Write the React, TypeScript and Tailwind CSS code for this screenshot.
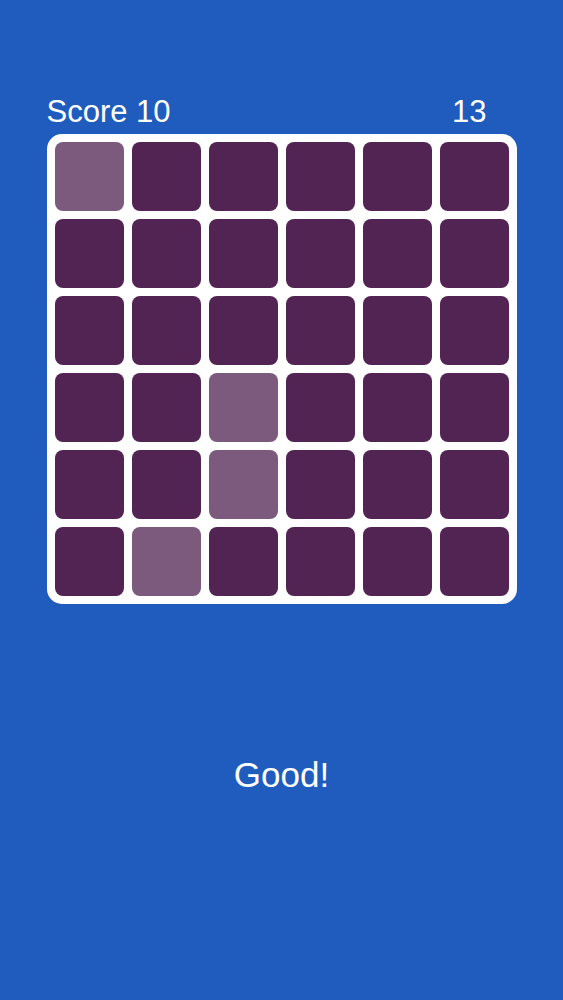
import React from "react";

const lit = new Set(["0-0", "3-2", "4-2", "5-1"]);

export default function App() {
  const rows = [0, 1, 2, 3, 4, 5];
  return (
    <div
      className="w-[563px] h-[1000px] bg-[#1f5cbd] text-white flex flex-col items-center"
      style={{ fontFamily: '"Liberation Sans", Arial, sans-serif' }}
    >
      <div className="w-[470px] mt-[96px] flex justify-between items-center pr-[30px] text-[31px] leading-[31px]">
        <span>Score 10</span>
        <span>13</span>
      </div>
      <div className="mt-[7px] w-[470px] h-[470px] bg-white rounded-[15px] p-[8px] grid grid-cols-6 grid-rows-6 gap-[8px]">
        {rows.map((r) =>
          rows.map((c) => (
            <div
              key={`${r}-${c}`}
              className={`rounded-[8px] ${lit.has(`${r}-${c}`) ? "bg-[#7b5a7e]" : "bg-[#522454]"}`}
            />
          ))
        )}
      </div>
      <div className="mt-[153px] text-[35px] leading-[35px]">Good!</div>
    </div>
  );
}
